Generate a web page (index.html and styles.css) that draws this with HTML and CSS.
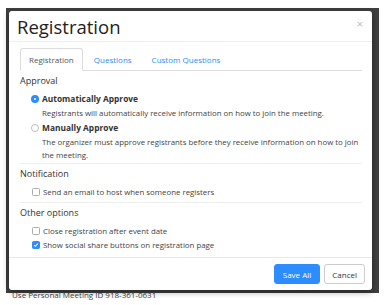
FILE: index.html
```html
<!DOCTYPE html>
<html lang="en">
<head>
    <meta charset="UTF-8">
    <meta name="viewport" content="width=device-width, initial-scale=1.0">
    <title>Registration</title>
    <link rel="stylesheet" href="styles.css">
</head>
<body>
    <div class="page-top"></div>

    <div class="overlay">
        <div class="modal">
            <div class="modal-header">
                <h2>Registration</h2>
                <span class="close">&times;</span>
            </div>

            <div class="modal-body">
                <ul class="tabs">
                    <li class="tab active">Registration</li>
                    <li class="tab">Questions</li>
                    <li class="tab">Custom Questions</li>
                </ul>

                <div class="section">
                    <h3>Approval</h3>
                    <div class="options">
                        <div class="option">
                            <span class="radio checked"></span>
                            <span class="label bold">Automatically Approve</span>
                        </div>
                        <p class="desc">Registrants will automatically receive information on how to join the meeting.</p>
                        <div class="option next">
                            <span class="radio"></span>
                            <span class="label bold">Manually Approve</span>
                        </div>
                        <p class="desc">The organizer must approve registrants before they receive information on how to join the meeting.</p>
                    </div>
                </div>

                <div class="section">
                    <h3>Notification</h3>
                    <div class="options">
                        <div class="option">
                            <span class="checkbox"></span>
                            <span class="label">Send an email to host when someone registers</span>
                        </div>
                    </div>
                </div>

                <div class="section last">
                    <h3>Other options</h3>
                    <div class="options">
                        <div class="option">
                            <span class="checkbox"></span>
                            <span class="label">Close registration after event date</span>
                        </div>
                        <div class="option next">
                            <span class="checkbox checked">
                                <svg viewBox="0 0 8 8" width="6" height="6"><path d="M1.5 4.2 L3.2 5.8 L6.5 2" fill="none" stroke="#fff" stroke-width="1.4"/></svg>
                            </span>
                            <span class="label">Show social share buttons on registration page</span>
                        </div>
                    </div>
                </div>
            </div>

            <div class="modal-footer">
                <button class="btn btn-primary">Save All</button>
                <button class="btn">Cancel</button>
            </div>
        </div>
    </div>

    <div class="page-bottom">Use Personal Meeting ID 918-361-0631</div>
</body>
</html>
```

FILE: styles.css
```css
body {
    margin: 0;
    padding: 0;
    background: #fff;
    font-family: "Open Sans", "Liberation Sans", sans-serif;
    color: #333;
    width: 387px;
    height: 305px;
    overflow: hidden;
}

.page-top {
    height: 8px;
}

.overlay {
    position: relative;
    z-index: 1;
    margin-left: 6px;
    width: 373px;
    height: 285px;
    background: #3f3f3f;
    padding-top: 3px;
    box-sizing: border-box;
}

.modal {
    margin-left: 3px;
    width: 363px;
    background: #fff;
    border-radius: 3px;
    box-shadow: 0 2px 6px rgba(0, 0, 0, 0.4);
}

.modal-header {
    display: flex;
    justify-content: space-between;
    align-items: center;
    height: 30px;
    padding: 0 9px 0 8px;
    border-bottom: 1px solid #eee;
}

.modal-header h2 {
    margin: 0;
    font-size: 18.5px;
    font-weight: normal;
    color: #222;
}

.close {
    color: #bbb;
    font-size: 11px;
    margin-top: -6px;
}

.modal-body {
    padding: 6px 10px 0 11px;
}

.tabs {
    display: flex;
    list-style: none;
    margin: 0;
    padding: 0;
    border-bottom: 1px solid #ddd;
}

.tab {
    font-size: 8px;
    line-height: 21px;
    padding: 0 8px;
    margin-right: 2px;
    margin-bottom: -1px;
    border: 1px solid transparent;
    border-radius: 3px 3px 0 0;
    color: #2d8cff;
}

.tab.active {
    color: #555;
    background: #fff;
    border-color: #ddd;
    border-bottom-color: #fff;
}

.section {
    padding: 4px 0 1px;
    border-bottom: 1px solid #eee;
}

.section + .section {
    padding: 4px 0 4px;
}

.section.last {
    border-bottom: none;
    padding-bottom: 6px;
}

.section h3 {
    margin: 0;
    font-size: 9px;
    font-weight: normal;
    line-height: 12px;
    color: #333;
}

.options {
    margin-top: 5px;
    padding-left: 11px;
}

.option {
    display: flex;
    align-items: center;
    height: 13px;
}

.option.next {
    margin-top: 1px;
}

.label {
    font-size: 7.85px;
    color: #444;
    margin-left: 3px;
}

.label.bold {
    font-size: 8.4px;
    font-weight: bold;
    color: #333;
}

.desc {
    margin: 2px 0 0 11px;
    font-size: 7.85px;
    line-height: 13px;
    color: #444;
}

.desc + .option {
    margin-top: 1px;
}

.radio {
    width: 6px;
    height: 6px;
    border: 1px solid #bbb;
    border-radius: 50%;
    background: #fff;
    flex-shrink: 0;
}

.radio.checked {
    width: 2px;
    height: 2px;
    border: 3px solid #2d8cff;
    background: #fff;
}

.checkbox {
    width: 6px;
    height: 6px;
    margin-left: 1px;
    border: 1px solid #aaa;
    border-radius: 1.5px;
    background: #fff;
    display: flex;
    align-items: center;
    justify-content: center;
    flex-shrink: 0;
}

.checkbox.checked {
    background: #2d8cff;
    border-color: #2d8cff;
}

.modal-footer {
    display: flex;
    justify-content: flex-end;
    gap: 4px;
    padding: 6px 7px 6px;
    border-top: 1px solid #e8e8e8;
}

.btn {
    height: 20px;
    padding: 0 7px;
    font-family: inherit;
    font-size: 8px;
    color: #333;
    background: #fff;
    border: 1px solid #ccc;
    border-radius: 3px;
    white-space: nowrap;
}

.btn-primary {
    padding: 0 8px;
    background: #2d8cff;
    border-color: #2d8cff;
    color: #fff;
}

.page-bottom {
    padding-left: 12px;
    font-size: 8px;
    line-height: 14px;
    color: #444;
    margin-top: -5px;
}
```
